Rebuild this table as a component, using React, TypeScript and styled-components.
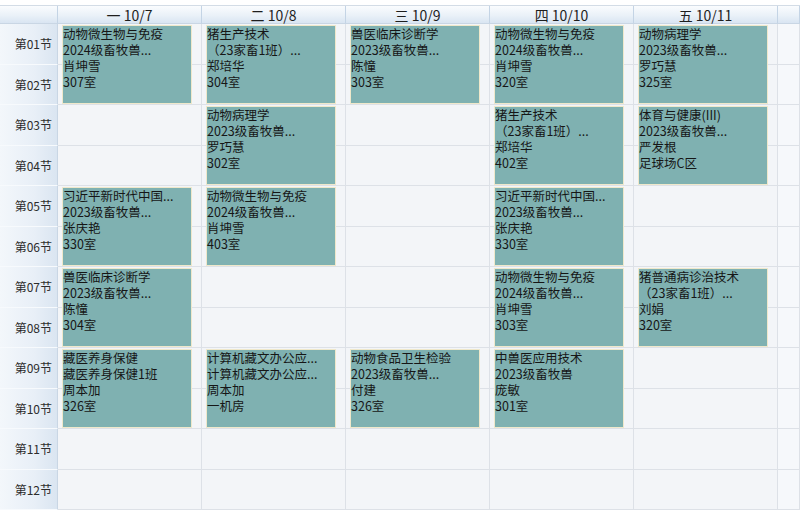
import React from "react";
import styled, { createGlobalStyle } from "styled-components";

const Global = createGlobalStyle`
  html, body { margin: 0; padding: 0; background: #ffffff; }
  body { font-family: "Noto Sans CJK SC", "Noto Sans", sans-serif; }
`;

const Page = styled.div`
  width: 800px;
  height: 510px;
  padding-top: 5px;
  box-sizing: border-box;
  overflow: hidden;
  background: #ffffff;
`;

const Table = styled.div`
  display: grid;
  grid-template-columns: 58px repeat(5, 144px) 1fr;
  grid-template-rows: 18px repeat(12, 40.5px);
  border-top: 1px solid #d3dce6;
`;

const HeadCell = styled.div<{ $col: number }>`
  grid-row: 1;
  grid-column: ${(p) => p.$col};
  display: flex;
  align-items: center;
  justify-content: center;
  box-sizing: border-box;
  background: linear-gradient(to bottom, #fafcfe 0%, #eaf1f8 55%, #d9e5f2 100%);
  border-right: 1px solid #c4d4e5;
  border-bottom: 1px solid #c9d6e4;
  font-size: 14px;
  line-height: 16px;
  color: #1e1e1e;
  white-space: nowrap;
`;

const LabelCell = styled.div<{ $row: number }>`
  grid-row: ${(p) => p.$row};
  grid-column: 1;
  display: flex;
  align-items: center;
  justify-content: flex-end;
  padding-right: 5px;
  box-sizing: border-box;
  background: linear-gradient(to right, #f3f7fb 0%, #e8eff7 60%, #dae5f1 100%);
  border-right: 1px solid #c9d6e4;
  border-bottom: 1px solid #f7fafd;
  font-size: 12px;
  color: #2c2c2c;
  white-space: nowrap;
`;

const Cell = styled.div<{ $row: number; $col: number; $last?: boolean }>`
  grid-row: ${(p) => p.$row};
  grid-column: ${(p) => p.$col};
  box-sizing: border-box;
  background: ${(p) => (p.$last ? "#f6f8fb" : "#f3f5f8")};
  border-right: 1px solid #dde1e7;
  border-bottom: 1px solid #dde1e7;
`;

const Card = styled.div<{ $row: number; $col: number }>`
  grid-row: ${(p) => p.$row} / span 2;
  grid-column: ${(p) => p.$col};
  margin: 1px 10px 1px 4px;
  z-index: 1;
  box-sizing: border-box;
  background: #7fb1b1;
  border: 1px solid #efe8cb;
  font-size: 12.5px;
  line-height: 16px;
  color: #161616;
  white-space: nowrap;
`;

const Line = styled.div`
  height: 16px;
`;

type Course = { day: number; start: number; lines: string[] };

const days = ["一 10/7", "二 10/8", "三 10/9", "四 10/10", "五 10/11"];

const courses: Course[] = [
  { day: 1, start: 1, lines: ["动物微生物与免疫", "2024级畜牧兽...", "肖坤雪", "307室"] },
  { day: 1, start: 5, lines: ["习近平新时代中国...", "2023级畜牧兽...", "张庆艳", "330室"] },
  { day: 1, start: 7, lines: ["兽医临床诊断学", "2023级畜牧兽...", "陈憧", "304室"] },
  { day: 1, start: 9, lines: ["藏医养身保健", "藏医养身保健1班", "周本加", "326室"] },
  { day: 2, start: 1, lines: ["猪生产技术", "（23家畜1班）...", "郑培华", "304室"] },
  { day: 2, start: 3, lines: ["动物病理学", "2023级畜牧兽...", "罗巧慧", "302室"] },
  { day: 2, start: 5, lines: ["动物微生物与免疫", "2024级畜牧兽...", "肖坤雪", "403室"] },
  { day: 2, start: 9, lines: ["计算机藏文办公应...", "计算机藏文办公应...", "周本加", "一机房"] },
  { day: 3, start: 1, lines: ["兽医临床诊断学", "2023级畜牧兽...", "陈憧", "303室"] },
  { day: 3, start: 9, lines: ["动物食品卫生检验", "2023级畜牧兽...", "付建", "326室"] },
  { day: 4, start: 1, lines: ["动物微生物与免疫", "2024级畜牧兽...", "肖坤雪", "320室"] },
  { day: 4, start: 3, lines: ["猪生产技术", "（23家畜1班）...", "郑培华", "402室"] },
  { day: 4, start: 5, lines: ["习近平新时代中国...", "2023级畜牧兽...", "张庆艳", "330室"] },
  { day: 4, start: 7, lines: ["动物微生物与免疫", "2024级畜牧兽...", "肖坤雪", "303室"] },
  { day: 4, start: 9, lines: ["中兽医应用技术", "2023级畜牧兽", "庞敏", "301室"] },
  { day: 5, start: 1, lines: ["动物病理学", "2023级畜牧兽...", "罗巧慧", "325室"] },
  { day: 5, start: 3, lines: ["体育与健康(III)", "2023级畜牧兽...", "严发根", "足球场C区"] },
  { day: 5, start: 7, lines: ["猪普通病诊治技术", "（23家畜1班）...", "刘娟", "320室"] },
];

const periods = Array.from({ length: 12 }, (_, i) => i + 1);

export default function App() {
  return (
    <Page>
      <Global />
      <Table>
        <HeadCell $col={1} />
        {days.map((d, i) => (
          <HeadCell key={d} $col={i + 2}>
            {d}
          </HeadCell>
        ))}
        <HeadCell $col={7} />
        {periods.map((p) => (
          <React.Fragment key={p}>
            <LabelCell $row={p + 1}>第{String(p).padStart(2, "0")}节</LabelCell>
            {[2, 3, 4, 5, 6, 7].map((c) => (
              <Cell key={c} $row={p + 1} $col={c} $last={c === 7} />
            ))}
          </React.Fragment>
        ))}
        {courses.map((c, i) => (
          <Card key={i} $row={c.start + 1} $col={c.day + 1}>
            {c.lines.map((l, j) => (
              <Line key={j}>{l}</Line>
            ))}
          </Card>
        ))}
      </Table>
    </Page>
  );
}
